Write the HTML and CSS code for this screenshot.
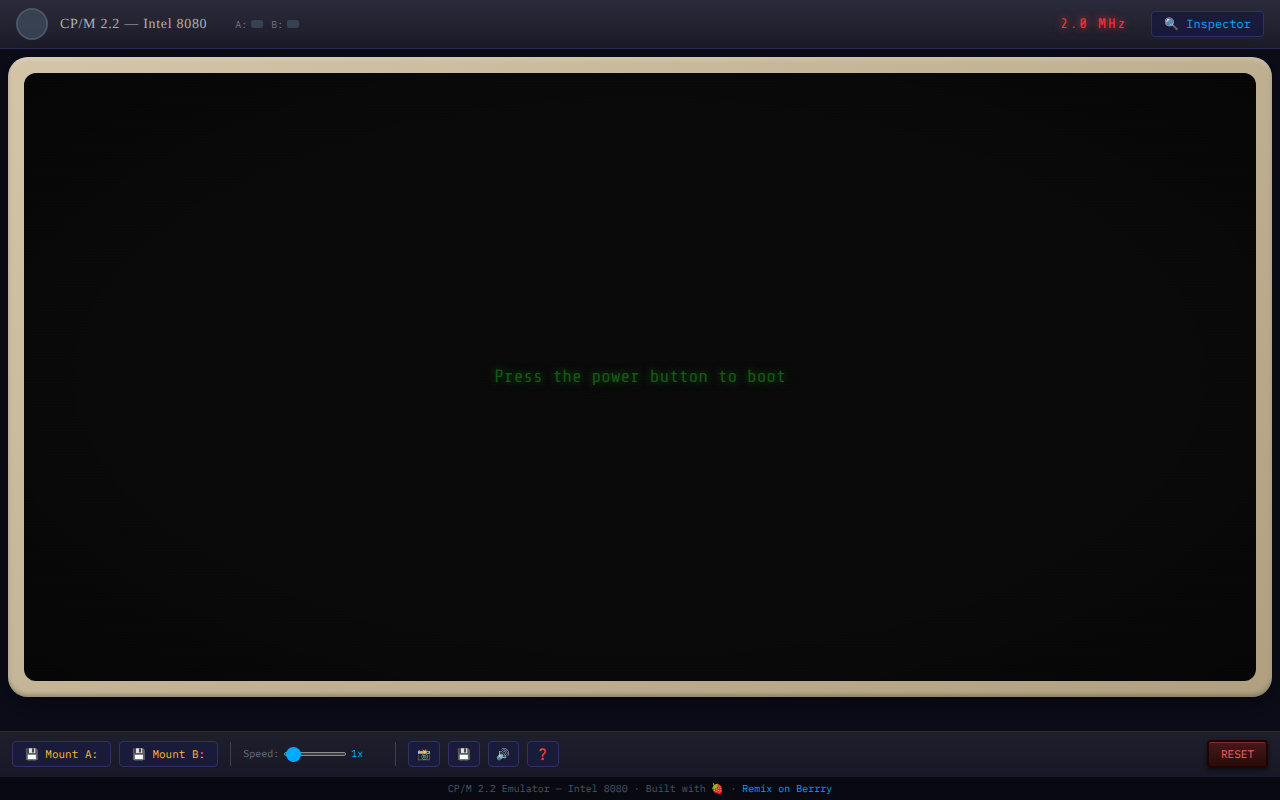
FILE: index.html
```html
<!DOCTYPE html>
<html lang="en">
<head>
    <meta charset="UTF-8">
    <meta name="viewport" content="width=device-width, initial-scale=1.0">
    <title>CP/M 2.2 Emulator</title>
    <link rel="stylesheet" href="styles.css">
</head>
<body>
    <header class="top-bar">
        <button class="power-btn" type="button" aria-label="Power"></button>
        <h1 class="title">CP/M 2.2 — Intel 8080</h1>
        <div class="drives">
            <span class="drive">A:<span class="led"></span></span>
            <span class="drive">B:<span class="led"></span></span>
        </div>
        <div class="mhz">2.0 MHz</div>
        <button class="btn inspector-btn" type="button">🔍 Inspector</button>
    </header>

    <main class="main">
        <div class="bezel">
            <div class="screen">
                <p class="boot-msg">Press the power button to boot</p>
            </div>
        </div>
    </main>

    <div class="toolbar">
        <button class="btn mount-btn" type="button">💾 Mount A:</button>
        <button class="btn mount-btn" type="button">💾 Mount B:</button>
        <div class="divider"></div>
        <div class="speed">
            <label for="speed">Speed:</label>
            <input id="speed" class="slider" type="range" min="1" max="50" value="2">
            <output class="speed-value" for="speed">1x</output>
        </div>
        <div class="divider"></div>
        <button class="btn icon-btn" type="button">📸</button>
        <button class="btn icon-btn" type="button">💾</button>
        <button class="btn icon-btn" type="button">🔊</button>
        <button class="btn icon-btn" type="button">❓</button>
        <button class="reset-btn" type="button">RESET</button>
    </div>

    <footer class="footer">CP/M 2.2 Emulator — Intel 8080 · Built with 🍓 · <a href="#">Remix on Berrry</a></footer>
</body>
</html>
```

FILE: styles.css
```css
* {
    box-sizing: border-box;
    margin: 0;
    padding: 0;
    text-rendering: geometricPrecision;
}

body {
    display: flex;
    flex-direction: column;
    min-height: 100vh;
    background: #0d0d1a;
    color: #6b7280;
    font-family: "IBM Plex Mono", "Liberation Mono", monospace;
    font-size: 11px;
    line-height: 1.5;
}

button {
    font-family: inherit;
    cursor: pointer;
}

/* top bar */
.top-bar {
    display: flex;
    align-items: center;
    height: 49px;
    padding: 0 16px;
    background: linear-gradient(180deg, #2a2a3a, #1c1c2a);
    border-bottom: 1px solid #2d2d5a;
}

.power-btn {
    width: 32px;
    height: 32px;
    border: 2px solid #4b5563;
    border-radius: 50%;
    background: #374151;
}

.title {
    margin-left: 12px;
    color: #b0b0b0;
    font-family: "Liberation Serif", serif;
    font-size: 14px;
    font-weight: normal;
    letter-spacing: 0.05em;
}

.drives {
    display: flex;
    gap: 8px;
    margin-left: 28px;
    font-size: 10px;
}

.drive {
    display: flex;
    align-items: center;
    gap: 4px;
}

.led {
    width: 12px;
    height: 8px;
    border-radius: 2px;
    background: #374151;
}

.mhz {
    margin-left: auto;
    margin-right: 24px;
    color: #ff3333;
    font-family: "Share Tech Mono", "Liberation Mono", monospace;
    font-size: 14px;
    letter-spacing: 2px;
    text-shadow: 0 0 8px #ff3333;
}

.btn {
    padding: 0 12px;
    border: 1px solid #303064;
    border-radius: 4px;
    background: #1a1a3a;
}

.inspector-btn {
    height: 26px;
    color: #00aaff;
    font-size: 12px;
}

/* monitor */
.main {
    display: flex;
    flex: 1;
    padding: 8px 8px 34px;
}

.bezel {
    display: flex;
    flex: 1;
    padding: 16px;
    border-radius: 20px;
    background: linear-gradient(145deg, #d4c5a9, #b0a080);
    box-shadow: 0 8px 32px rgba(0, 0, 0, 0.5), inset 0 2px 4px rgba(255, 255, 255, 0.3), inset 0 -2px 4px rgba(0, 0, 0, 0.3);
}

.screen {
    display: flex;
    flex: 1;
    align-items: center;
    justify-content: center;
    border-radius: 12px;
    background:
        repeating-linear-gradient(0deg, rgba(0, 0, 0, 0.15) 0, rgba(0, 0, 0, 0.15) 1px, transparent 1px, transparent 3px),
        radial-gradient(ellipse at center, transparent 60%, rgba(0, 0, 0, 0.4) 100%),
        #0a0a0a;
}

.boot-msg {
    color: #165816;
    font-family: "Share Tech Mono", "Liberation Mono", monospace;
    font-size: 18px;
    line-height: 28px;
    text-shadow: 0 0 8px #165816;
}

/* bottom controls */
.toolbar {
    display: flex;
    align-items: center;
    gap: 8px;
    height: 46px;
    padding: 0 12px;
    background: linear-gradient(180deg, #1e1e2c, #181826);
    border-top: 1px solid #26264a;
    border-bottom: 1px solid #1a1a30;
}

.toolbar .btn {
    height: 26px;
    padding: 1px 12px 0;
    font-size: 11px;
}

.toolbar .mount-btn {
    color: #fbbf24;
}

.toolbar .icon-btn {
    padding: 1px 8px 0;
}

.divider {
    width: 1px;
    height: 24px;
    margin: 0 4px;
    background: #374151;
}

.speed {
    display: flex;
    align-items: center;
    gap: 5px;
    font-size: 10px;
    line-height: 14px;
}

.slider {
    width: 62px;
    height: 4px;
    border: 1px solid #8a8a8a;
    border-radius: 2px;
    background: #3b3b3b;
    appearance: none;
}

.slider::-webkit-slider-thumb {
    width: 15px;
    height: 15px;
    border-radius: 50%;
    background: #00aaff;
    appearance: none;
}

.speed-value {
    width: 32px;
    color: #00aaff;
}

.reset-btn {
    height: 28px;
    margin-left: auto;
    padding: 1px 12px 0;
    border: 2px solid #200404;
    border-radius: 4px;
    background: linear-gradient(180deg, #451a1a, #2a0a0a);
    box-shadow: 0 2px 4px rgba(0, 0, 0, 0.5), inset 0 1px 0 rgba(255, 100, 100, 0.3);
    color: #f06060;
    font-size: 11px;
}

.footer {
    height: 23px;
    background: #090912;
    color: #4b5563;
    font-size: 10px;
    line-height: 23px;
    text-align: center;
}

.footer a {
    color: #00a0f0;
    text-decoration: none;
}
```
